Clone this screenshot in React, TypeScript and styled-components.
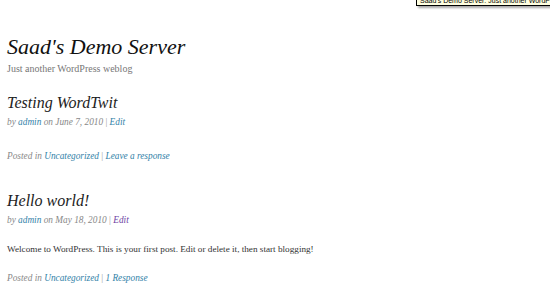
import React from 'react';
import styled, { createGlobalStyle } from 'styled-components';

const GlobalStyle = createGlobalStyle`
  html, body {
    margin: 0;
    padding: 0;
    background: #fff;
  }
  body {
    width: 550px;
    height: 306px;
    overflow: hidden;
    font-family: 'Liberation Serif', Georgia, serif;
  }
`;

const Page = styled.div`
  position: relative;
  width: 550px;
  height: 306px;
  padding: 34px 7px 0;
  box-sizing: border-box;
`;

const Tooltip = styled.div`
  position: absolute;
  top: -5px;
  left: 416px;
  padding: 0 3px;
  border: 1px solid #000;
  background: #ffffe1;
  box-shadow: 2px 2px 2px rgba(0, 0, 0, 0.35);
  font-family: 'Liberation Sans', Arial, sans-serif;
  font-size: 7px;
  line-height: 9px;
  white-space: nowrap;
  color: #000;
`;

const Header = styled.header`
  margin-bottom: 18px;
`;

const BlogTitle = styled.h1`
  margin: 0;
  font-size: 22px;
  line-height: 26px;
  font-weight: normal;
  font-style: italic;
  color: #111;
`;

const Tagline = styled.div`
  margin-top: 3px;
  font-size: 10px;
  line-height: 12px;
  color: #777;
`;

const Post = styled.article`
  margin-bottom: 29px;
`;

const PostTitle = styled.h2`
  margin: 0;
  font-size: 16px;
  line-height: 20px;
  font-weight: normal;
  font-style: italic;
  color: #222;
`;

const Meta = styled.div`
  margin-top: 3px;
  font-size: 9.3px;
  line-height: 12px;
  font-style: italic;
  color: #888;
`;

const Content = styled.p`
  margin: 17px 0 0;
  font-size: 9.2px;
  line-height: 12px;
  color: #333;
`;

const Footer = styled.div<{ gap: number }>`
  margin-top: ${(p) => p.gap}px;
  font-size: 9.3px;
  line-height: 12px;
  font-style: italic;
  color: #888;
`;

const Link = styled.a<{ visited?: boolean }>`
  color: ${(p) => (p.visited ? '#6e3fa3' : '#3282a8')};
  text-decoration: none;
`;

const Sep = styled.span`
  color: #999;
  font-style: normal;
`;

const posts = [
  {
    title: 'Testing WordTwit',
    date: 'June 7, 2010',
    editVisited: false,
    content: '',
    comments: 'Leave a response',
  },
  {
    title: 'Hello world!',
    date: 'May 18, 2010',
    editVisited: true,
    content:
      'Welcome to WordPress. This is your first post. Edit or delete it, then start blogging!',
    comments: '1 Response',
  },
];

const App = () => {
  return (
    <Page>
      <GlobalStyle />
      <Tooltip>Saad's Demo Server: Just another WordPress weblog</Tooltip>
      <Header>
        <BlogTitle>Saad's Demo Server</BlogTitle>
        <Tagline>Just another WordPress weblog</Tagline>
      </Header>
      {posts.map((post, i) => (
        <Post key={i}>
          <PostTitle>{post.title}</PostTitle>
          <Meta>
            by <Link href="#">admin</Link> on {post.date} <Sep>|</Sep>{' '}
            <Link href="#" visited={post.editVisited}>
              Edit
            </Link>
          </Meta>
          {post.content && <Content>{post.content}</Content>}
          <Footer gap={post.content ? 17 : 22}>
            Posted in <Link href="#">Uncategorized</Link> <Sep>|</Sep>{' '}
            <Link href="#">{post.comments}</Link>
          </Footer>
        </Post>
      ))}
    </Page>
  );
};

export default App;
